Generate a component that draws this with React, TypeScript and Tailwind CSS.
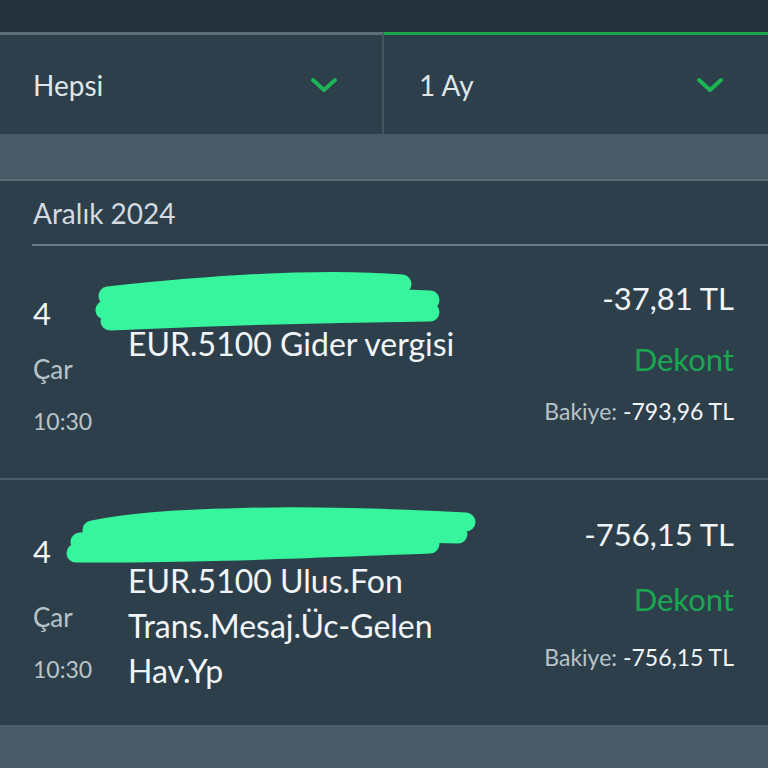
import React from "react";

const font = { fontFamily: "Lato, 'Open Sans', sans-serif" };

function Chevron() {
  return (
    <svg width="28" height="16" viewBox="0 0 28 16" fill="none">
      <path d="M3 3 L14 13 L25 3" stroke="#1db455" strokeWidth="4" strokeLinecap="round" strokeLinejoin="round" />
    </svg>
  );
}

export default function App() {
  return (
    <div className="w-[768px] h-[768px] overflow-hidden bg-[#475a66] text-[#e9eef1] font-normal" style={font}>
      <div className="h-[32px] bg-[#25333d]" />
      <div className="flex h-[102px] bg-[#2d3f4b]">
        <div className="w-[384px] border-t-[3px] border-[#5d6e78] border-r-2 border-r-[#43555f] flex items-center justify-between pl-[33px] pr-[44px]">
          <span className="text-[28px] text-[#dfe6ea] leading-none">Hepsi</span>
          <Chevron />
        </div>
        <div className="flex-1 border-t-[3px] border-[#19a64f] flex items-center justify-between pl-[35px] pr-[44px]">
          <span className="text-[28px] text-[#dfe6ea] leading-none">1 Ay</span>
          <Chevron />
        </div>
      </div>
      <div className="h-[45px] bg-[#475a66]" />
      <div className="h-[2px] bg-[#5b6d77]" />
      <div className="h-[63px] bg-[#2d3f4b] flex items-center pl-[33px]">
        <span className="text-[28px] text-[#d3dbe0] leading-none">Aralık 2024</span>
      </div>
      <div className="h-[2px] bg-[#2f414d] flex">
        <div className="w-[32px]" />
        <div className="flex-1 bg-[#6d7d87]" />
      </div>

      {/* Row 1 */}
      <div className="relative h-[234px] bg-[#2d3f4b] border-b-2 border-[#4c5e69] flex">
        <div className="w-[95px] pl-[33px] flex flex-col">
          <div className="mt-[50px] text-[31px] leading-[34px] text-[#f2f5f7]">4</div>
          <div className="mt-[24px] text-[26px] leading-[30px] text-[#b9c4ca]">Çar</div>
          <div className="mt-[22px] text-[23px] leading-[30px] text-[#b9c4ca]">10:30</div>
        </div>
        <div className="flex-1 pl-[33px] flex flex-col">
          <div className="mt-[79px] text-[32px] leading-[38px] text-[#f2f5f7] whitespace-nowrap">EUR.5100 Gider vergisi</div>
        </div>
        <div className="pr-[34px] flex flex-col items-end">
          <div className="mt-[34px] text-[31px] leading-[36px] text-[#f2f5f7] whitespace-nowrap">-37,81 TL</div>
          <div className="mt-[25px] text-[31px] leading-[36px] text-[#1aa752]">Dekont</div>
          <div className="mt-[20px] text-[23px] leading-[28px] text-[#f2f5f7] whitespace-nowrap">
            <span className="text-[#b9c4ca]">Bakiye:</span> -793,96 TL
          </div>
        </div>
        <svg className="absolute left-0 top-0 pointer-events-none" width="768" height="234" viewBox="0 0 768 234" fill="none">
          <g stroke="#36f59c" strokeWidth="19" strokeLinecap="round">
            <path d="M108 50 C 200 40, 320 31, 402 38" />
            <path d="M105 64 C 200 55, 330 50, 430 54" />
            <path d="M110 75 C 220 70, 340 67, 430 66" />
          </g>
        </svg>
      </div>

      {/* Row 2 */}
      <div className="relative h-[247px] bg-[#2d3f4b] border-b-2 border-[#4c5e69] flex">
        <div className="w-[95px] pl-[33px] flex flex-col">
          <div className="mt-[54px] text-[31px] leading-[34px] text-[#f2f5f7]">4</div>
          <div className="mt-[34px] text-[26px] leading-[30px] text-[#b9c4ca]">Çar</div>
          <div className="mt-[22px] text-[23px] leading-[30px] text-[#b9c4ca]">10:30</div>
        </div>
        <div className="flex-1 pl-[33px] flex flex-col">
          <div className="mt-[78px] text-[32px] leading-[45px] text-[#f2f5f7] whitespace-nowrap">
            EUR.5100 Ulus.Fon
            <br />
            Trans.Mesaj.Üc-Gelen
            <br />
            Hav.Yp
          </div>
        </div>
        <div className="pr-[34px] flex flex-col items-end">
          <div className="mt-[36px] text-[31px] leading-[36px] text-[#f2f5f7] whitespace-nowrap">-756,15 TL</div>
          <div className="mt-[29px] text-[31px] leading-[36px] text-[#1aa752]">Dekont</div>
          <div className="mt-[26px] text-[23px] leading-[28px] text-[#f2f5f7] whitespace-nowrap">
            <span className="text-[#b9c4ca]">Bakiye:</span> -756,15 TL
          </div>
        </div>
        <svg className="absolute left-0 top-0 pointer-events-none" width="768" height="246" viewBox="0 0 768 246" fill="none">
          <g stroke="#36f59c" strokeWidth="19" strokeLinecap="round">
            <path d="M92 50 C 160 36, 300 33, 466 42" />
            <path d="M80 62 C 200 54, 350 50, 458 54" />
            <path d="M76 73 C 200 74, 320 68, 430 64" />
          </g>
        </svg>
      </div>
    </div>
  );
}
